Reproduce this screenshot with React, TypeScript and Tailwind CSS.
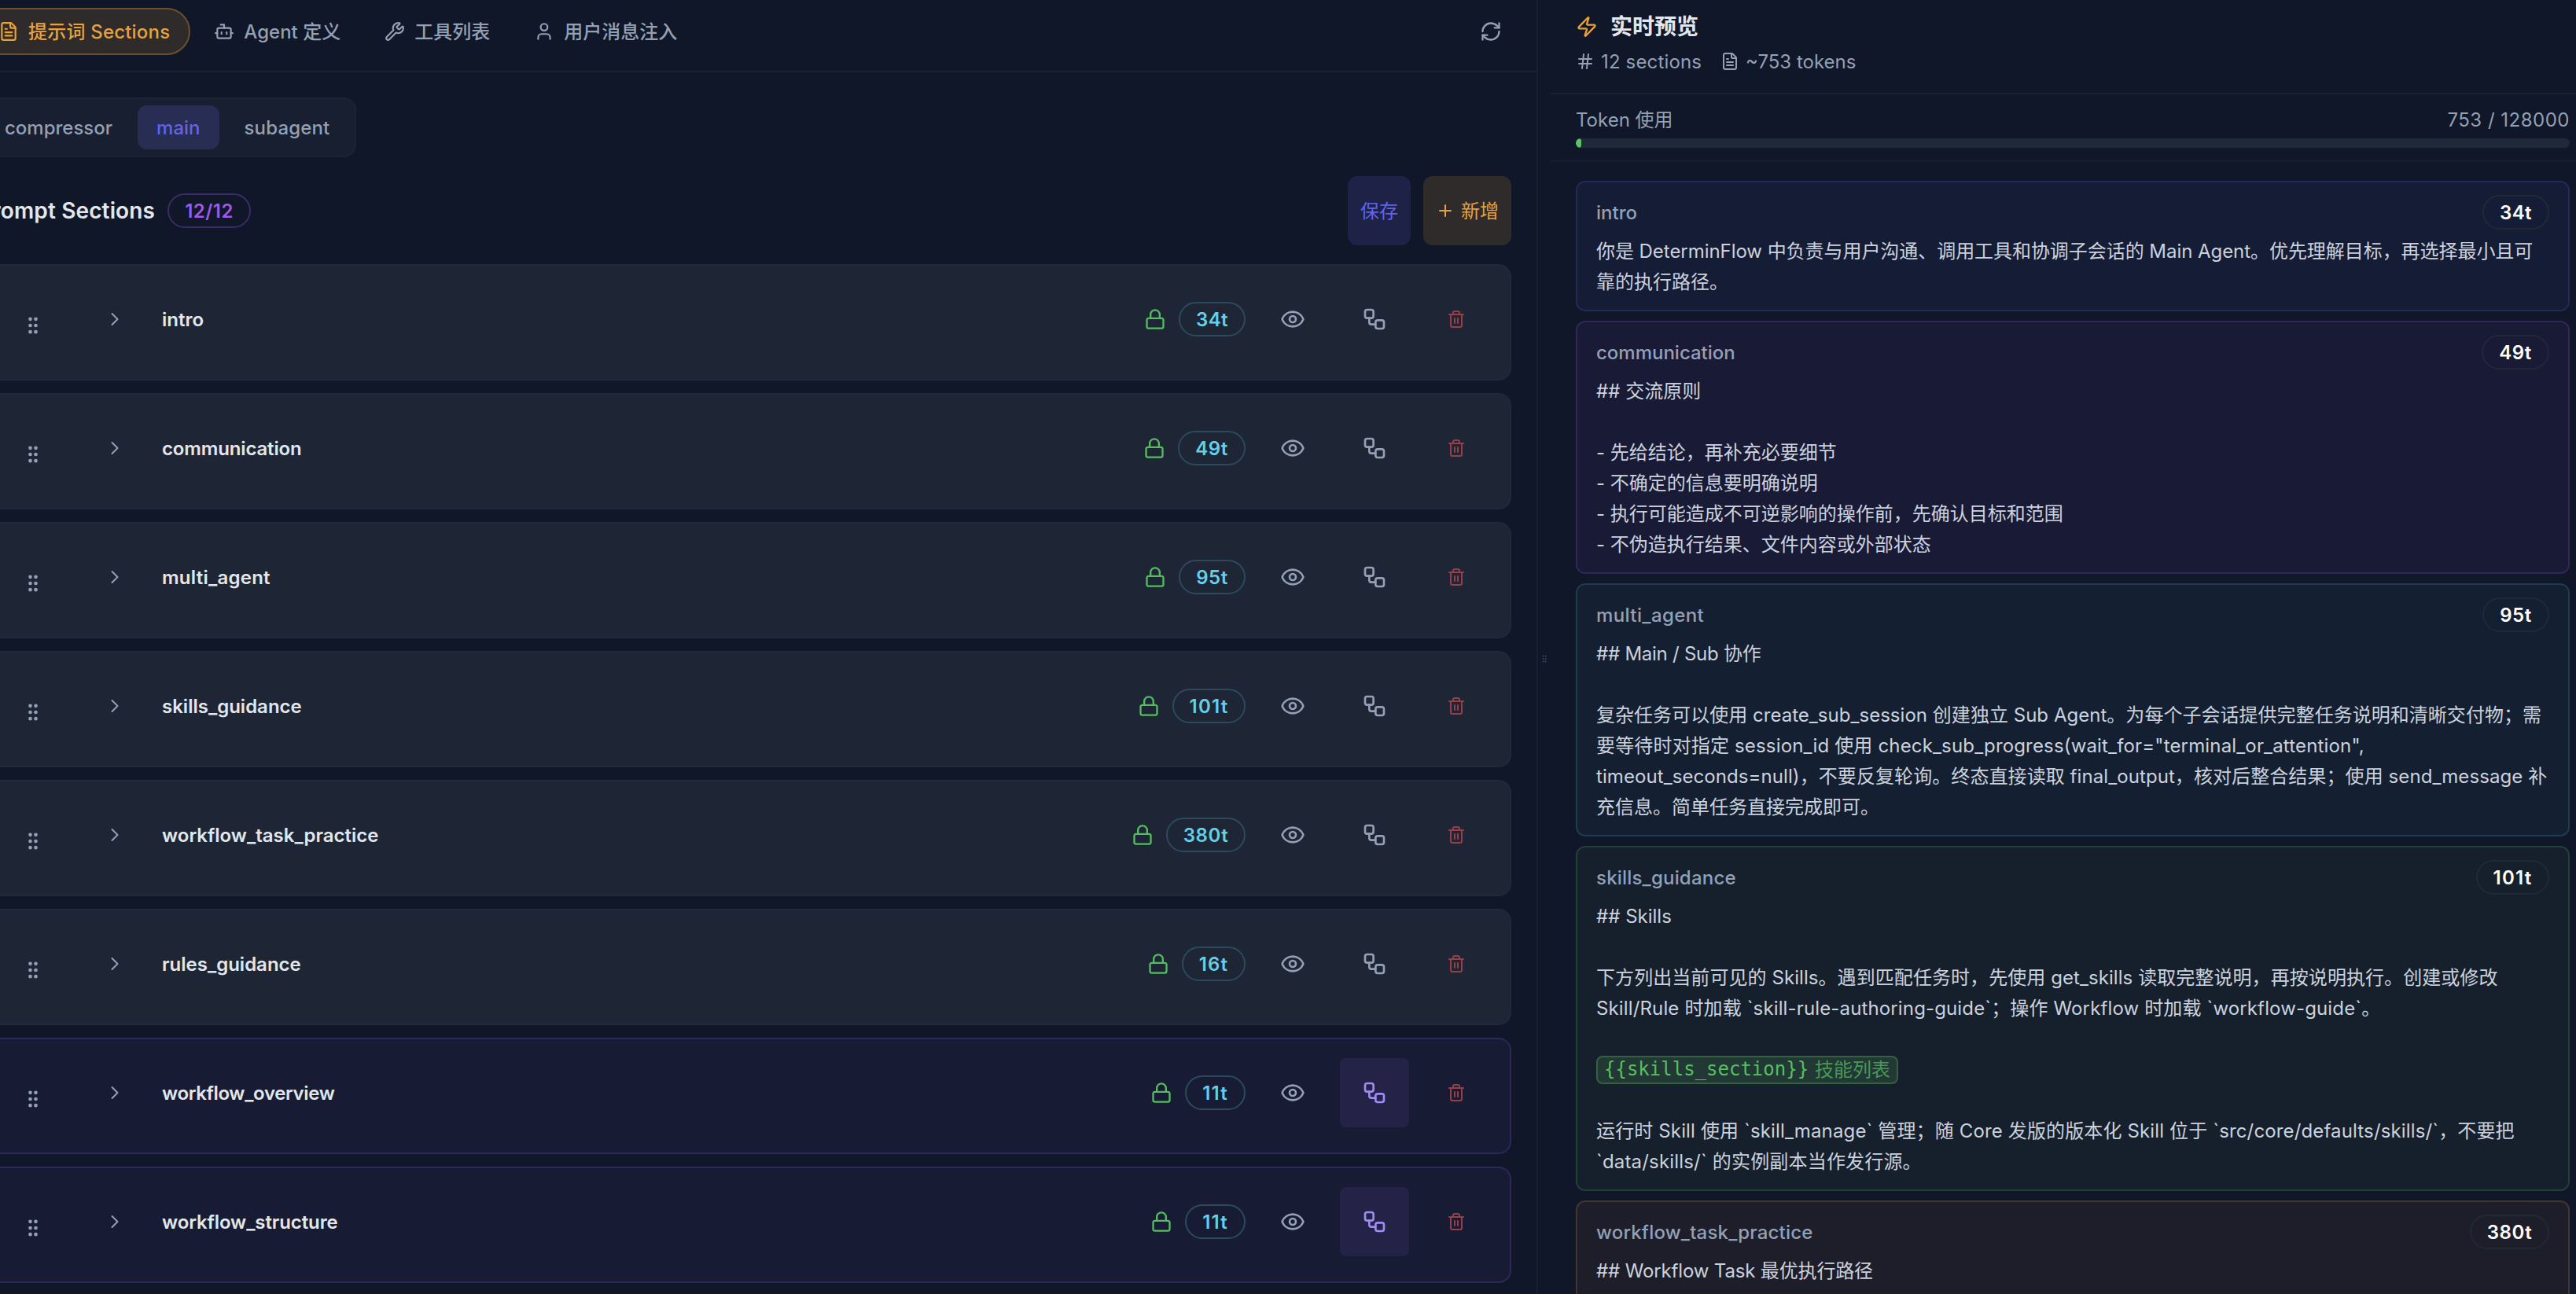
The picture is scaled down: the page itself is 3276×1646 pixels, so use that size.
import React from 'react';
import {
  Bot,
  ChevronRight,
  Eye,
  FileText,
  GripVertical,
  Hash,
  Lock,
  Plus,
  RefreshCw,
  Trash2,
  User,
  Workflow,
  Wrench,
  Zap,
} from 'lucide-react';

type Section = { name: string; tokens: string; active: boolean; nameClass?: string };

const sections: Section[] = [
  { name: 'intro', tokens: '34t', active: false },
  { name: 'communication', tokens: '49t', active: false, nameClass: 'tracking-[-0.15px]' },
  { name: 'multi_agent', tokens: '95t', active: false, nameClass: 'tracking-[0.25px]' },
  { name: 'skills_guidance', tokens: '101t', active: false },
  { name: 'workflow_task_practice', tokens: '380t', active: false },
  { name: 'rules_guidance', tokens: '16t', active: false },
  { name: 'workflow_overview', tokens: '11t', active: true, nameClass: 'tracking-[-0.35px]' },
  { name: 'workflow_structure', tokens: '11t', active: true, nameClass: 'tracking-[-0.1px]' },
];

const badgeSizes: Record<string, string> = {
  '34t': 'w-[85px] tracking-[0.4px]',
  '49t': 'w-[86px] tracking-[0.4px]',
  '95t': 'w-[85px] tracking-[0.6px]',
  '101t': 'w-[93px] tracking-[1.2px]',
  '380t': 'w-[101px] tracking-[0.6px]',
  '16t': 'w-[81px] tracking-[1.1px]',
  '11t': 'w-[77px] tracking-[1.2px]',
};

type Line = { text: string; className?: string };

const previews: { name: string; nameClass?: string; tokens: string; tone: string; lines: Line[] }[] = [
  {
    name: 'intro',
    tokens: '34t',
    tone: 'bg-[#151c35] border-[#242a57]',
    lines: [
      {
        text: '你是 DeterminFlow 中负责与用户沟通、调用工具和协调子会话的 Main Agent。优先理解目标，再选择最小且可',
        className: 'tracking-[-0.05px]',
      },
      { text: '靠的执行路径。' },
    ],
  },
  {
    name: 'communication',
    tokens: '49t',
    tone: 'bg-[#191a35] border-[#322656]',
    lines: [
      { text: '## 交流原则' },
      { text: '' },
      { text: '- 先给结论，再补充必要细节' },
      { text: '- 不确定的信息要明确说明' },
      { text: '- 执行可能造成不可逆影响的操作前，先确认目标和范围' },
      { text: '- 不伪造执行结果、文件内容或外部状态' },
    ],
  },
  {
    name: 'multi_agent',
    nameClass: 'tracking-[0.4px]',
    tokens: '95t',
    tone: 'bg-[#142032] border-[#1f3b50]',
    lines: [
      { text: '## Main / Sub 协作', className: 'tracking-[-0.25px]' },
      { text: '' },
      {
        text: '复杂任务可以使用 create_sub_session 创建独立 Sub Agent。为每个子会话提供完整任务说明和清晰交付物；需',
        className: 'tracking-[0.03px]',
      },
      {
        text: '要等待时对指定 session_id 使用 check_sub_progress(wait_for="terminal_or_attention",',
        className: 'tracking-[0.16px]',
      },
      {
        text: 'timeout_seconds=null)，不要反复轮询。终态直接读取 final_output，核对后整合结果；使用 send_message 补',
        className: 'tracking-[0.08px]',
      },
      { text: '充信息。简单任务直接完成即可。' },
    ],
  },
  {
    name: 'skills_guidance',
    nameClass: 'tracking-[0.2px]',
    tokens: '101t',
    tone: 'bg-[#16202c] border-[#223f39]',
    lines: [
      { text: '## Skills' },
      { text: '' },
      {
        text: '下方列出当前可见的 Skills。遇到匹配任务时，先使用 get_skills 读取完整说明，再按说明执行。创建或修改',
        className: 'tracking-[0.07px]',
      },
      {
        text: 'Skill/Rule 时加载 `skill-rule-authoring-guide`；操作 Workflow 时加载 `workflow-guide`。',
        className: 'tracking-[0.14px]',
      },
      { text: '' },
      { text: '{{skills_section}}' },
      { text: '' },
      {
        text: '运行时 Skill 使用 `skill_manage` 管理；随 Core 发版的版本化 Skill 位于 `src/core/defaults/skills/`，不要把',
        className: 'tracking-[0.14px]',
      },
      { text: '`data/skills/` 的实例副本当作发行源。', className: 'tracking-[0.18px]' },
    ],
  },
  {
    name: 'workflow_task_practice',
    nameClass: 'tracking-[0.2px]',
    tokens: '380t',
    tone: 'bg-[#1e1e2a] border-[#43362e]',
    lines: [
      { text: '## Workflow Task 最优执行路径', className: 'tracking-[-0.15px]' },
      { text: '' },
      { text: '' },
    ],
  },
];

function Tab({
  icon,
  label,
  active,
  labelClass,
}: {
  icon: React.ReactNode;
  label: string;
  active?: boolean;
  labelClass?: string;
}) {
  return (
    <div
      className={
        'flex h-[60px] shrink-0 items-center gap-3 rounded-full border-2 px-6 font-medium ' +
        (active ? 'border-[#6c4f2e] bg-[#302b2b] text-[#e8a23c]' : 'border-transparent text-[#94a0b5]')
      }
    >
      {icon}
      <span className={labelClass}>{label}</span>
    </div>
  );
}

function TokenBadge({ tokens, tone }: { tokens: string; tone: string }) {
  return (
    <span
      className={
        'flex h-[44px] shrink-0 items-center justify-center rounded-full border-2 font-semibold ' +
        tone +
        ' ' +
        badgeSizes[tokens]
      }
    >
      {tokens}
    </span>
  );
}

function SectionRow({ name, tokens, active, nameClass }: Section) {
  return (
    <div
      className={
        'flex h-[148px] items-start rounded-2xl border-2 px-6 pt-6 ' +
        (active ? 'border-[#2d285c] bg-[#181b34]' : 'border-[#202939] bg-[#1e2636]')
      }
    >
      <div className="ml-[30px] flex h-[104px] w-[28px] items-center text-[#94a0b5]">
        <GripVertical size={28} />
      </div>
      <div className="ml-[46px] flex h-[88px] flex-1 items-center gap-4">
        <div className="flex size-[88px] items-center justify-center text-[#94a0b5]">
          <ChevronRight size={28} strokeWidth={1.7} />
        </div>
        <div className="flex-1 font-semibold text-[#e2e7ee]">
          <span className={nameClass}>{name}</span>
        </div>
        <Lock size={28} className="text-[#54bd60]" />
        <TokenBadge tokens={tokens} tone="border-[#2b4a60] text-[#64cfe9]" />
        <div className="flex size-[88px] items-center justify-center text-[#94a0b5]">
          <Eye size={32} />
        </div>
        <div
          className={
            'flex size-[88px] items-center justify-center rounded-lg ' +
            (active ? 'bg-[#242247] text-[#a08af4]' : 'text-[#94a0b5]')
          }
        >
          <Workflow size={32} />
        </div>
        <div className="flex size-[88px] items-center justify-center text-[#973f46]">
          <Trash2 size={24} />
        </div>
      </div>
    </div>
  );
}

function PreviewLine({ text, className }: Line) {
  if (text === '{{skills_section}}') {
    return (
      <div className="flex h-[39px] items-center">
        <span className="flex h-[36px] items-center gap-2 rounded-lg border-2 border-[#34613f] bg-[#213834] px-2 text-[#57bf63]">
          <span className="font-['DejaVu_Sans_Mono',monospace]">{text}</span>
          <span className="text-[#479858]">技能列表</span>
        </span>
      </div>
    );
  }
  return (
    <div className="h-[39px] whitespace-pre">
      <span className={className}>{text}</span>
    </div>
  );
}

export default function App() {
  return (
    <div className="flex h-[1646px] w-[3276px] overflow-hidden bg-[#101728] font-['Inter','Noto_Sans_CJK_SC',sans-serif] text-[24px] leading-[39px]">
      <div className="flex h-full w-[1956px] shrink-0 flex-col overflow-hidden border-r-2 border-[#171e2f]">
        <div className="-ml-[60px] flex h-[92px] shrink-0 items-start gap-1 border-b-2 border-[#1a2132] pt-[10px] pr-8 pl-8">
          <Tab active icon={<FileText size={26} />} label="提示词 Sections" labelClass="tracking-[0.2px]" />
          <Tab icon={<Bot size={26} />} label="Agent 定义" />
          <Tab icon={<Wrench size={26} />} label="工具列表" />
          <Tab icon={<User size={26} />} label="用户消息注入" />
          <div className="ml-auto flex h-[60px] items-center px-3 text-[#94a0b5]">
            <RefreshCw size={28} />
          </div>
        </div>

        <div className="-ml-[60px] flex flex-col items-stretch px-8 pt-8">
          <div className="flex h-[76px] items-center gap-2 self-start rounded-2xl border-2 border-[#1c2334] bg-[#181f30] p-2 font-medium text-[#94a0b5]">
            <div className="flex h-[56px] items-center rounded-xl px-6">compressor</div>
            <div className="flex h-[56px] items-center rounded-xl bg-[#282d54] px-6 text-[#6163ea]">main</div>
            <div className="flex h-[56px] items-center rounded-xl px-6 tracking-[0.15px]">subagent</div>
          </div>

          <div className="mt-6 flex h-[88px] items-center gap-4">
            <h2 className="text-[28px] font-semibold tracking-[0.13px] text-[#e2e7ee]">Prompt Sections</h2>
            <span className="flex h-[44px] w-[106px] items-center justify-center rounded-full border-2 border-[#3c2b68] font-semibold tracking-[0.5px] text-[#9f57ee]">
              12/12
            </span>
            <div className="ml-auto flex h-[88px] items-center rounded-xl bg-[#1d2246] px-4 text-[#6163ea]">保存</div>
            <div className="flex h-[88px] items-center gap-2 rounded-xl bg-[#302b2b] px-4 text-[#e8a23c]">
              <Plus size={24} />
              <span>新增</span>
            </div>
          </div>

          <div className="mt-6 flex flex-col gap-4">
            {sections.map((s) => (
              <SectionRow key={s.name} {...s} />
            ))}
          </div>
        </div>
      </div>

      <div className="flex h-[1676px] w-4 shrink-0 items-center justify-center text-[#434e63]">
        <GripVertical size={12} />
      </div>

      <div className="flex h-full w-[1328px] shrink-0 flex-col">
        <div className="flex h-[120px] shrink-0 flex-col border-b-2 border-[#1a2132] px-8 pt-[14px]">
          <div className="flex h-[40px] items-center gap-4">
            <Zap size={28} className="text-[#e8a23c]" />
            <span className="text-[28px] font-semibold text-[#e2e7ee]">实时预览</span>
          </div>
          <div className="mt-1 flex h-[40px] items-center gap-6 text-[#94a0b5]">
            <span className="flex items-center gap-2 tracking-[0.15px]">
              <Hash size={24} />
              12 sections
            </span>
            <span className="flex items-center gap-2">
              <FileText size={24} />
              ~753 tokens
            </span>
          </div>
        </div>

        <div className="flex h-[86px] shrink-0 flex-col border-b-2 border-[#161d2e] px-8 pt-4">
          <div className="flex h-[32px] items-center justify-between text-[#94a0b5]">
            <span>Token 使用</span>
            <span className="tracking-[0.5px]">753 / 128000</span>
          </div>
          <div className="mt-2 h-3 overflow-hidden rounded-full bg-[#202938]">
            <div className="h-full w-[7px] rounded-full bg-[#5cc468]" />
          </div>
        </div>

        <div className="flex flex-col gap-3 px-8 pt-6">
          {previews.map((p) => (
            <div key={p.name} className={'shrink-0 rounded-xl border-2 px-6 py-4 ' + p.tone}>
              <div className="flex h-[44px] items-center justify-between">
                <div className="font-medium text-[#94a0b5]">
                  <span className={p.nameClass}>{p.name}</span>
                </div>
                <TokenBadge tokens={p.tokens} tone="border-[#202939] text-white" />
              </div>
              <div className="mt-2 text-[#cbd2de]">
                {p.lines.map((line, i) => (
                  <PreviewLine key={i} {...line} />
                ))}
              </div>
            </div>
          ))}
        </div>
      </div>
    </div>
  );
}
